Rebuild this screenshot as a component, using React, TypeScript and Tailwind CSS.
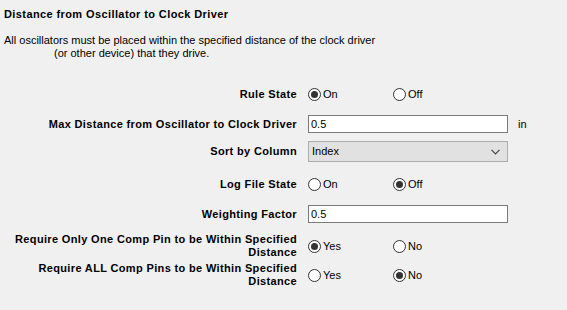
import type { ReactNode } from "react";

const font = { fontFamily: '"Liberation Sans", Arial, sans-serif' };

function Radio({ checked, label }: { checked?: boolean; label: string }) {
  return (
    <span className="flex w-[85px] items-center">
      <span className="flex h-[13px] w-[13px] items-center justify-center rounded-full border border-[#333333] bg-white">
        {checked && <span className="h-[7px] w-[7px] rounded-full bg-[#333333]" />}
      </span>
      <span className="ml-[2px] text-[11px] text-black">{label}</span>
    </span>
  );
}

function Row({
  label,
  children,
  className,
}: {
  label: ReactNode;
  children: ReactNode;
  className: string;
}) {
  return (
    <div className={`flex items-center ${className}`}>
      <div className="w-[297px] pl-[4px] text-right text-[11px] font-bold leading-[13px] tracking-[0.35px] text-black">
        {label}
      </div>
      <div className="ml-[11px] flex items-center">{children}</div>
    </div>
  );
}

export default function App() {
  return (
    <div className="h-[310px] w-[567px] overflow-hidden bg-[#f0f0f0]" style={font}>
      <div className="pl-[4px] pt-[8px] text-[11px] font-bold leading-[13px] tracking-[0.4px] text-black">
        Distance from Oscillator to Clock Driver
      </div>
      <div className="mt-[13px] pl-[4px] text-[11px] leading-[13px] text-black">
        <div>All oscillators must be placed within the specified distance of the clock driver</div>
        <div className="pl-[50px]">(or other device) that they drive.</div>
      </div>

      <div className="flex flex-col">
        <Row label="Rule State" className="mt-[24px] h-[20px]">
          <Radio checked label="On" />
          <Radio label="Off" />
        </Row>
        <Row label="Max Distance from Oscillator to Clock Driver" className="mt-[10px] h-[20px]">
          <div className="flex h-[18px] w-[200px] items-center border border-[#7a7a7a] bg-white pl-[2px] text-[11px] text-black">
            0.5
          </div>
          <span className="ml-[10px] text-[11px] text-black">in</span>
        </Row>
        <Row label="Sort by Column" className="mt-[7px] h-[21px]">
          <div className="flex h-[21px] w-[200px] items-center justify-between border border-[#adadad] bg-[#e1e1e1] pl-[3px] pr-[7px] text-[11px] text-black">
            <span>Index</span>
            <svg width="9" height="6" viewBox="0 0 9 6" fill="none" stroke="#444" strokeWidth="1.2">
              <path d="M0.5 0.8 L4.5 4.8 L8.5 0.8" />
            </svg>
          </div>
        </Row>
        <Row label="Log File State" className="mt-[12px] h-[20px]">
          <Radio label="On" />
          <Radio checked label="Off" />
        </Row>
        <Row label="Weighting Factor" className="mt-[10px] h-[20px]">
          <div className="flex h-[18px] w-[200px] items-center border border-[#7a7a7a] bg-white pl-[2px] text-[11px] text-black">
            0.5
          </div>
        </Row>
        <Row label="Require Only One Comp Pin to be Within Specified Distance" className="mt-[9px] h-[26px]">
          <Radio checked label="Yes" />
          <Radio label="No" />
        </Row>
        <Row label="Require ALL Comp Pins to be Within Specified Distance" className="mt-[3px] h-[26px]">
          <Radio label="Yes" />
          <Radio checked label="No" />
        </Row>
      </div>
    </div>
  );
}
